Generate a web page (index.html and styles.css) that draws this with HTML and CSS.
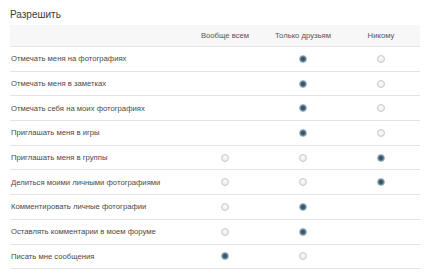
FILE: index.html
```html
<!DOCTYPE html>
<html lang="ru">
<head>
  <meta charset="UTF-8">
  <title>Разрешить</title>
  <link rel="stylesheet" href="styles.css">
</head>
<body>
  <div class="privacy">
    <!-- Section title -->
    <div class="title">Разрешить</div>

    <!-- Settings table -->
    <div class="table">
      <div class="row head">
        <div class="label"></div>
        <div class="cell">Вообще всем</div>
        <div class="cell">Только друзьям</div>
        <div class="cell last">Никому</div>
      </div>

      <div class="row">
        <div class="label">Отмечать меня на фотографиях</div>
        <div class="cell"></div>
        <div class="cell"><span class="radio on"></span></div>
        <div class="cell last"><span class="radio"></span></div>
      </div>
      <div class="row">
        <div class="label">Отмечать меня в заметках</div>
        <div class="cell"></div>
        <div class="cell"><span class="radio on"></span></div>
        <div class="cell last"><span class="radio"></span></div>
      </div>
      <div class="row">
        <div class="label">Отмечать себя на моих фотографиях</div>
        <div class="cell"></div>
        <div class="cell"><span class="radio on"></span></div>
        <div class="cell last"><span class="radio"></span></div>
      </div>
      <div class="row">
        <div class="label">Приглашать меня в игры</div>
        <div class="cell"></div>
        <div class="cell"><span class="radio on"></span></div>
        <div class="cell last"><span class="radio"></span></div>
      </div>
      <div class="row">
        <div class="label">Приглашать меня в группы</div>
        <div class="cell"><span class="radio"></span></div>
        <div class="cell"><span class="radio"></span></div>
        <div class="cell last"><span class="radio on"></span></div>
      </div>
      <div class="row">
        <div class="label">Делиться моими личными фотографиями</div>
        <div class="cell"><span class="radio"></span></div>
        <div class="cell"><span class="radio"></span></div>
        <div class="cell last"><span class="radio on"></span></div>
      </div>
      <div class="row">
        <div class="label">Комментировать личные фотографии</div>
        <div class="cell"><span class="radio"></span></div>
        <div class="cell"><span class="radio on"></span></div>
        <div class="cell last"></div>
      </div>
      <div class="row">
        <div class="label">Оставлять комментарии в моем форуме</div>
        <div class="cell"><span class="radio"></span></div>
        <div class="cell"><span class="radio on"></span></div>
        <div class="cell last"></div>
      </div>
      <div class="row">
        <div class="label">Писать мне сообщения</div>
        <div class="cell"><span class="radio on"></span></div>
        <div class="cell"><span class="radio"></span></div>
        <div class="cell last"></div>
      </div>
    </div>
  </div>
</body>
</html>
```

FILE: styles.css
```css
/* Page */
body {
  margin: 0;
  background: #fff;
  font-family: "Liberation Sans", Arial, sans-serif;
  color: #4a4a4a;
}

.privacy {
  padding: 8px 0 0 10px;
}

/* Section title */
.title {
  font-size: 10px;
  color: #3a3a3a;
  height: 17px;
  line-height: 14px;
}

/* Table */
.row {
  display: grid;
  grid-template-columns: 1fr 78px 78px 78px;
  align-items: center;
  height: 24.7px;
  box-sizing: border-box;
  border-bottom: 1px solid #e4e4e4;
  font-size: 7.7px;
  margin-right: 4px;
}

.row.head {
  height: 22px;
  background: #f7f7f7;
  color: #555;
}

.label {
  padding-left: 1px;
}

.cell {
  text-align: center;
  height: 10px;
  line-height: 10px;
}

/* Radio buttons */
.radio {
  display: inline-block;
  width: 8px;
  height: 8px;
  box-sizing: border-box;
  border-radius: 50%;
  border: 1px solid #cacaca;
  background: radial-gradient(circle at 50% 40%, #fdfdfd, #e2e2e2);
  vertical-align: middle;
}

.radio.on {
  border-color: #9bb2c0;
  background: radial-gradient(circle, #2f4d63 0, #3f6077 45%, #a9bfcc 100%);
}
```
